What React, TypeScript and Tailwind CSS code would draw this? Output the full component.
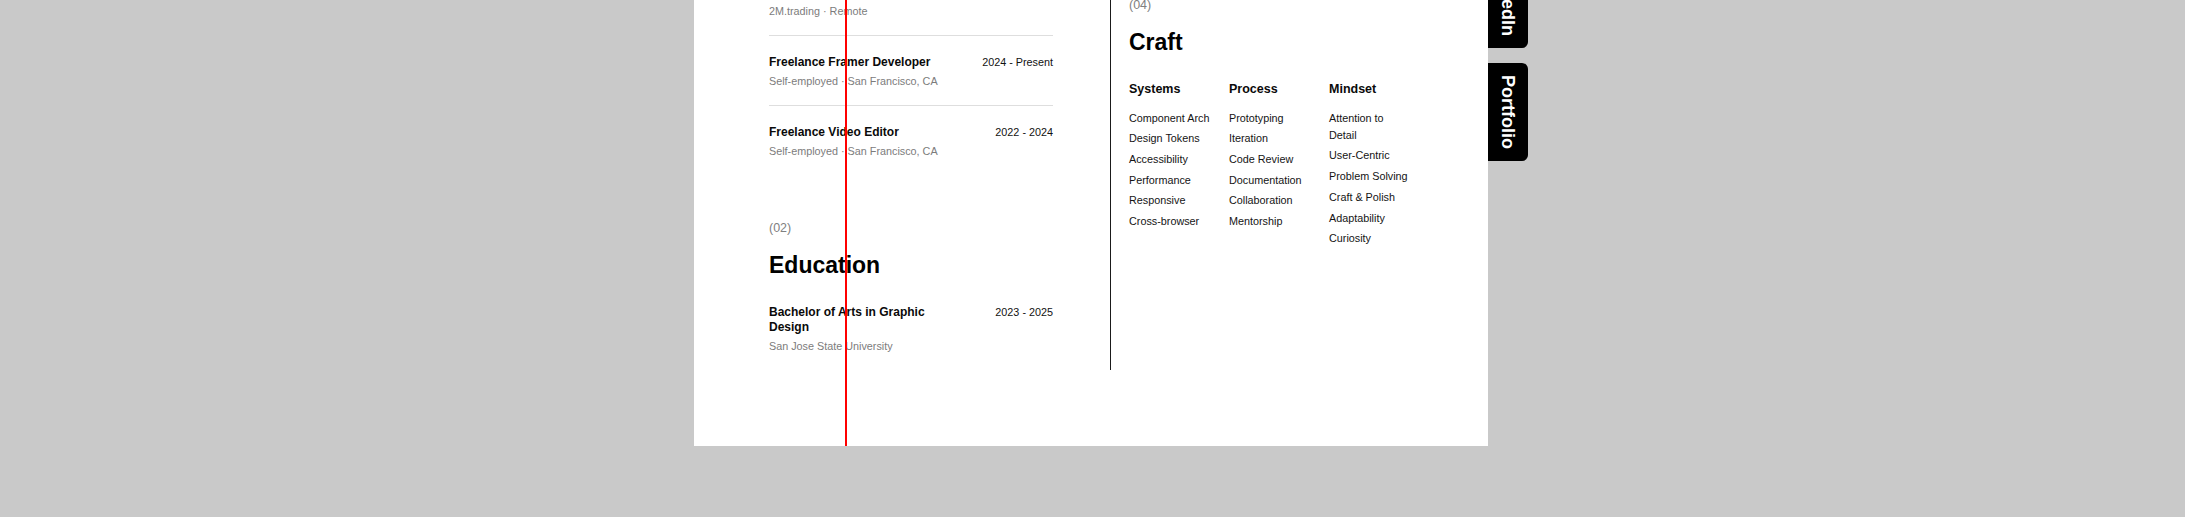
import React from "react";

type Row = { title: string; org: string; date: string };

const experience: Row[] = [
  { title: "Framer Developer", org: "2M.trading · Remote", date: "2025 - Present" },
  { title: "Freelance Framer Developer", org: "Self-employed · San Francisco, CA", date: "2024 - Present" },
  { title: "Freelance Video Editor", org: "Self-employed · San Francisco, CA", date: "2022 - 2024" },
];

const craft: { head: string; items: string[] }[] = [
  {
    head: "Systems",
    items: ["Component Arch", "Design Tokens", "Accessibility", "Performance", "Responsive", "Cross-browser"],
  },
  {
    head: "Process",
    items: ["Prototyping", "Iteration", "Code Review", "Documentation", "Collaboration", "Mentorship"],
  },
  {
    head: "Mindset",
    items: ["Attention to Detail", "User-Centric", "Problem Solving", "Craft & Polish", "Adaptability", "Curiosity"],
  },
];

function Entry({ row, last }: { row: Row; last?: boolean }) {
  return (
    <div
      className={
        "flex items-start justify-between pt-[19px] pb-[16px] " +
        (last ? "" : "border-b border-[#dedede]")
      }
    >
      <div className="max-w-[180px]">
        <div className="text-[12px] leading-[15px] font-bold text-[#0a0a0a]">{row.title}</div>
        <div className="mt-[4px] text-[10.8px] leading-[15px] text-[#7c7c7c]">{row.org}</div>
      </div>
      <div className="shrink-0 text-[10.8px] leading-[15px] text-[#111111]">{row.date}</div>
    </div>
  );
}

function SideTab({ label }: { label: string }) {
  return (
    <a className="flex h-[98px] w-[40px] items-center justify-center rounded-r-[6px] bg-black text-white">
      <span className="whitespace-nowrap text-[18px] leading-[22px] font-bold [writing-mode:vertical-rl]">
        {label}
      </span>
    </a>
  );
}

export default function App() {
  return (
    <div
      className="h-[517px] w-full overflow-hidden bg-[#c9c9c9]"
      style={{ fontFamily: '"Liberation Sans", Arial, Helvetica, sans-serif' }}
    >
      <div className="relative ml-[694px] mt-[-34px] w-[794px] bg-white px-[75px] pb-[76px]">
        <div className="grid grid-cols-[284px_1fr] gap-x-[57px]">
          {/* Left column */}
          <div>
            <div>
              {experience.map((r, i) => (
                <Entry key={r.title} row={r} last={i === experience.length - 1} />
              ))}
            </div>
            <div className="mt-[43.5px]">
              <div className="text-[12.5px] leading-[18px] text-[#808080]">(02)</div>
              <h2 className="mt-[14px] text-[23px] leading-[28px] font-bold text-black">Education</h2>
              <div className="mt-[26px] flex items-start justify-between pb-[16px]">
                <div className="max-w-[180px]">
                  <div className="text-[12px] leading-[15px] font-bold text-[#0a0a0a]">
                    Bachelor of Arts in Graphic Design
                  </div>
                  <div className="mt-[4px] text-[10.8px] leading-[15px] text-[#7c7c7c]">
                    San Jose State University
                  </div>
                </div>
                <div className="shrink-0 text-[10.8px] leading-[15px] text-[#111111]">2023 - 2025</div>
              </div>
            </div>
          </div>

          {/* Right column */}
          <div className="border-l border-[#1a1a1a] pl-[18px] pt-[29.5px]">
            <div className="text-[12.5px] leading-[18px] text-[#808080]">(04)</div>
            <h2 className="mt-[14px] text-[23px] leading-[28px] font-bold text-black">Craft</h2>
            <div className="mt-[26px] grid grid-cols-[83px_83px_83px] gap-x-[17px]">
              {craft.map((c) => (
                <div key={c.head}>
                  <div className="text-[12.5px] leading-[15px] font-bold text-[#0a0a0a]">{c.head}</div>
                  <ul className="mt-[13px] flex flex-col gap-[3.4px]">
                    {c.items.map((it) => (
                      <li key={it} className="text-[10.8px] leading-[17.3px] text-[#141414]">
                        {it}
                      </li>
                    ))}
                  </ul>
                </div>
              ))}
            </div>
          </div>
        </div>

        {/* guide line overlay */}
        <div className="pointer-events-none absolute inset-y-0 left-[151px] w-[2px] bg-[#ff0000]" />

        {/* side tabs */}
        <div className="absolute left-full top-[-16px] w-[40px]">
          <SideTab label="LinkedIn" />
          <div className="h-[15px]" />
          <SideTab label="Portfolio" />
        </div>
      </div>
    </div>
  );
}
